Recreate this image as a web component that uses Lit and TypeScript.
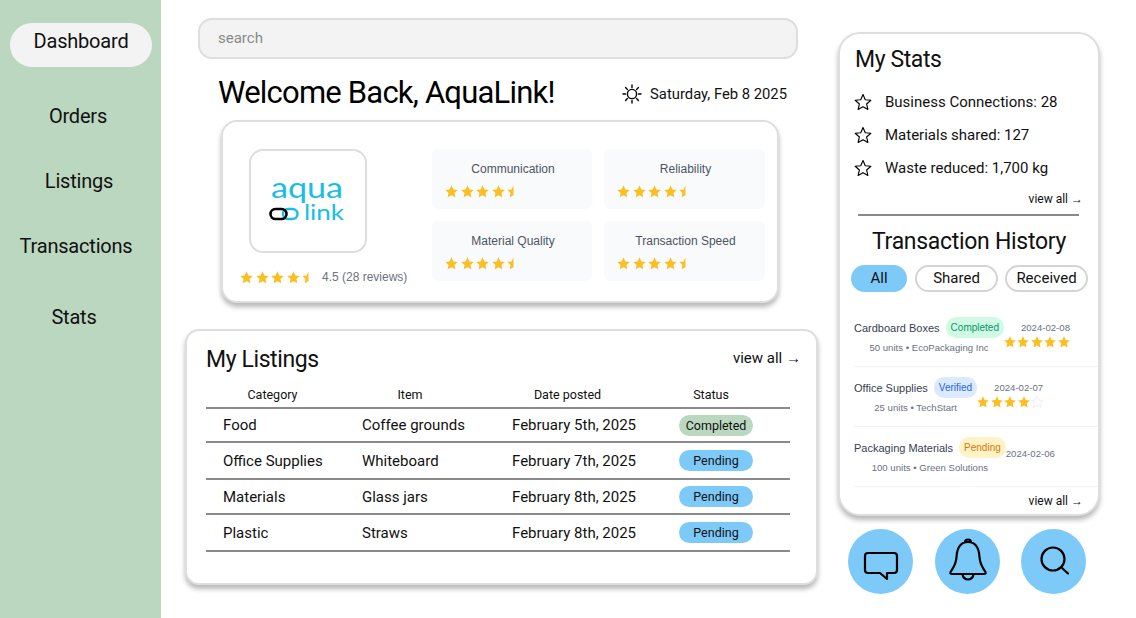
import { LitElement, html, css, svg } from 'lit'
import { customElement } from 'lit/decorators.js'

const STAR = 'M6 .3l1.750 3.750 4 .500-3 2.800.800 4.050L6 9.400l-3.550 2 .800-4.050-3-2.800 4-.500z'

// value is 0..5, a .5 gives the clipped half star of the reference
function stars(value: number) {
  return [1, 2, 3, 4, 5].map((n) => {
    const full = value >= n
    const half = !full && value > n - 1
    return html`<svg class="star" viewBox="0 0 12 12">
      ${half
        ? svg`<path d=${STAR} fill="#fbbf24" clip-path="inset(0 50% 0 0)"></path>`
        : svg`<path d=${STAR} fill=${full ? '#fbbf24' : 'none'} stroke=${full ? '#fbbf24' : '#e5e7eb'} stroke-width=${full ? 0 : 0.7}></path>`}
    </svg>`
  })
}

const ratings = ['Communication', 'Reliability', 'Material Quality', 'Transaction Speed']

const listings = [
  ['Food', 'Coffee grounds', 'February 5th, 2025', 'Completed'],
  ['Office Supplies', 'Whiteboard', 'February 7th, 2025', 'Pending'],
  ['Materials', 'Glass jars', 'February 8th, 2025', 'Pending'],
  ['Plastic', 'Straws', 'February 8th, 2025', 'Pending'],
]

const myStats = ['Business Connections: 28', 'Materials shared: 127', 'Waste reduced: 1,700 kg']

const history = [
  { name: 'Cardboard Boxes', badge: 'Completed', kind: 'done', sub: '50 units • EcoPackaging Inc', date: '2024-02-08', rate: 5 },
  { name: 'Office Supplies', badge: 'Verified', kind: 'verified', sub: '25 units • TechStart', date: '2024-02-07', rate: 4 },
  { name: 'Packaging Materials', badge: 'Pending', kind: 'pending', sub: '100 units • Green Solutions', date: '2024-02-06', rate: 0 },
]

@customElement('app-root')
export class AppRoot extends LitElement {
  static styles = css`
    :host {
      display: grid;
      grid-template-columns: 161px 677px 262px;
      width: 1136px;
      height: 618px;
      overflow: hidden;
      background: #fff;
      color: #111;
      font-family: 'Roboto', sans-serif;
    }

    .sidebar {
      background: #bbd7c0;
      padding: 23px 9px 0 10px;
      display: flex;
      flex-direction: column;
      font-size: 20px;
      letter-spacing: -0.2px;
    }
    .nav-item {
      height: 44px;
      text-align: center;
      margin-top: 21px;
      line-height: 44px;
      white-space: nowrap;
    }
    .nav-item.active {
      margin-top: 0;
      line-height: 36px;
      background: #f3f3f3;
      border-radius: 22px;
    }
    .nav-item:nth-child(2) { margin-top: 27px; padding-right: 6px; }
    .nav-item:nth-child(3) { padding-right: 4px; }
    .nav-item:nth-child(4) { padding-right: 10px; }
    .nav-item:nth-child(5) { margin-top: 27px; padding-right: 14px; }

    .main {
      padding: 18px 0 0 24px;
      display: flex;
      flex-direction: column;
    }
    .search {
      box-sizing: border-box;
      width: 600px;
      height: 41px;
      margin-left: 13px;
      padding: 0 18px 2px;
      display: flex;
      align-items: center;
      background: #f3f3f3;
      border: 2px solid #dedede;
      border-radius: 14px;
      color: #8a8a8a;
      font-size: 15px;
    }
    .welcome {
      display: flex;
      justify-content: space-between;
      align-items: center;
      width: 569px;
      height: 44px;
      margin: 11px 0 0 33px;
    }
    h1 {
      margin: 0;
      font-size: 31px;
      font-weight: 400;
      letter-spacing: -0.8px;
      color: #000;
    }
    .date {
      display: flex;
      align-items: center;
      gap: 8px;
      padding-top: 3px;
      font-size: 14.8px;
    }
    .date svg { width: 20px; height: 20px; }

    .card {
      box-sizing: border-box;
      background: #fff;
      border: 2px solid #dedede;
      box-shadow: 0 4px 5px rgba(0, 0, 0, 0.28);
    }
    .profile {
      width: 558px;
      height: 183px;
      margin: 6px 0 0 36px;
      border-radius: 16px;
      padding: 27px 11px 0 17px;
      display: flex;
    }
    .brand { width: 192px; flex: none; }
    .logo {
      box-sizing: border-box;
      width: 118px;
      height: 104px;
      margin: 0 0 0 9px;
      border: 2px solid #dedede;
      border-radius: 14px;
    }
    .logo svg { display: block; width: 100%; height: 100%; }
    .score {
      display: flex;
      align-items: center;
      gap: 7px;
      margin-top: 17px;
      font: 12px 'Liberation Sans', sans-serif;
      color: #6b7280;
    }
    .tiles {
      display: grid;
      grid-template-columns: 160px 161px;
      grid-auto-rows: 60px;
      gap: 12px;
    }
    .tile {
      box-sizing: border-box;
      background: #f9fafb;
      border-radius: 6px;
      padding: 13px 0 0 13px;
      font: 12px 'Liberation Sans', sans-serif;
      color: #4b5563;
    }
    .tile-label { text-align: center; padding-right: 11px; height: 23px; }

    .stars { display: flex; gap: 2.500px; }
    .star { width: 13px; height: 13px; display: block; flex: none; }

    .listings {
      width: 633px;
      height: 256px;
      margin-top: 26px;
      border-radius: 14px;
      padding: 0 26px 0 19px;
    }
    .listings-head {
      display: flex;
      justify-content: space-between;
      align-items: center;
      height: 55px;
      padding-top: 2px;
      box-sizing: border-box;
      margin-right: -11px;
    }
    h2 {
      margin: 0;
      font-size: 23px;
      font-weight: 400;
      letter-spacing: -0.4px;
      color: #111;
    }
    .view-all { font-size: 15px; white-space: nowrap; padding-bottom: 4px; }
    .row {
      display: grid;
      grid-template-columns: 139px 150px 167px 1fr;
      align-items: center;
      height: 35px;
      border-bottom: 2px solid #8a8a8a;
      box-sizing: border-box;
      font-size: 15px;
      padding-left: 17px;
    }
    .row:nth-of-type(even) { height: 37px; }
    .row:nth-of-type(3) { height: 34px; }
    .row.header {
      height: 23px;
      padding: 0 0 4px;
      font-size: 12.500px;
      grid-template-columns: 133px 142px 173px 114px;
      text-align: center;
    }
    .pill {
      width: 74px;
      height: 21px;
      line-height: 21px;
      border-radius: 11px;
      text-align: center;
      font-size: 12.500px;
      background: #7dc9f8;
    }
    .pill.done { background: #bbd7c0; }

    .side {
      padding-top: 32px;
      display: flex;
      flex-direction: column;
    }
    .stats {
      height: 484px;
      border-radius: 22px;
      padding: 12px 0 0 0;
      overflow: hidden;
    }
    .stats h2 { padding-left: 15px; line-height: 28px; }
    .stat {
      display: flex;
      align-items: center;
      gap: 13px;
      height: 33px;
      padding-left: 13px;
      font-size: 15px;
    }
    .stat-list { margin-top: 11px; }
    .stat svg { width: 18px; height: 18px; flex: none; margin-left: 1px; }
    .more {
      text-align: right;
      padding-right: 15px;
      margin-top: 7px;
      font-size: 12px;
      line-height: 16px;
    }
    .stats hr {
      margin: 7px 19px 0 18px;
      border: 0;
      border-top: 2px solid #8a8a8a;
    }
    .history-title {
      margin: 12px 0 0;
      text-align: center;
      font-size: 23px;
      font-weight: 400;
      letter-spacing: -0.3px;
      line-height: 28px;
    }
    .filters {
      display: flex;
      gap: 7px;
      margin: 9px 0 0 11px;
      font-size: 15px;
    }
    .filter {
      box-sizing: border-box;
      height: 27px;
      line-height: 23px;
      text-align: center;
      border: 2px solid #d4d4d4;
      border-radius: 14px;
      width: 83px;
    }
    .filter.on {
      width: 56px;
      margin-right: 1px;
      background: #7dc9f8;
      border-color: #7dc9f8;
    }
    .tx-list { margin: 15px 0 0 14px; }
    .tx {
      box-sizing: border-box;
      height: 60px;
      padding-bottom: 3px;
      border-bottom: 1px solid #f3f4f6;
      display: flex;
      align-items: center;
      font: 9.600px 'Liberation Sans', sans-serif;
      color: #6b7280;
    }
    .tx-name {
      display: flex;
      align-items: center;
      gap: 6px;
      color: #374151;
      font-size: 11px;
    }
    .badge {
      padding: 0 5px;
      height: 21px;
      line-height: 21px;
      border-radius: 10px;
      font-size: 10px;
    }
    .badge.done { background: #d1fae5; color: #059669; }
    .badge.verified { background: #dbeafe; color: #2563eb; }
    .badge.pending { background: #fef3c7; color: #d97706; }
    .tx-sub { text-align: center; margin-top: 4px; }
    .tx-side { display: flex; flex-direction: column; align-items: flex-end; }
    .tx-date { line-height: 12px; margin-bottom: 2px; }
    .tx .stars { gap: 1.500px; }
    .tx .star { width: 12px; height: 12px; }
    .foot { margin-top: 6px; }

    .actions {
      display: flex;
      gap: 21.500px;
      margin: 13px 0 0 10px;
    }
    .round {
      width: 65px;
      height: 65px;
      border-radius: 50%;
      background: #7dc9f8;
    }
    .round svg {
      display: block;
      width: 65px;
      height: 65px;
      fill: none;
      stroke: #000;
      stroke-width: 2.200;
      stroke-linejoin: round;
      stroke-linecap: round;
    }
  `

  renderSidebar() {
    const items = ['Dashboard', 'Orders', 'Listings', 'Transactions', 'Stats']
    return html`<nav class="sidebar">
      ${items.map((item, i) => html`<div class="nav-item ${i === 0 ? 'active' : ''}">${item}</div>`)}
    </nav>`
  }

  renderLogo() {
    return html`<svg viewBox="0 0 114 100">
      <text x="20" y="47" textLength="72" lengthAdjust="spacingAndGlyphs" font-family="Lato" font-size="29" fill="#19bde6">aqua</text>
      <text x="53" y="69" textLength="40" lengthAdjust="spacingAndGlyphs" font-family="Lato" font-size="21" fill="#19bde6">link</text>
      <rect x="32" y="58" width="14.500" height="10" rx="5" fill="none" stroke="#19bde6" stroke-width="2.400"></rect>
      <rect x="19.500" y="58" width="16" height="10" rx="5" fill="none" stroke="#000" stroke-width="2.600"></rect>
    </svg>`
  }

  renderProfile() {
    return html`<section class="card profile">
      <div class="brand">
        <div class="logo">${this.renderLogo()}</div>
        <div class="score"><div class="stars">${stars(4.5)}</div>4.5 (28 reviews)</div>
      </div>
      <div class="tiles">
        ${ratings.map(
          (r) => html`<div class="tile">
            <div class="tile-label">${r}</div>
            <div class="stars">${stars(4.5)}</div>
          </div>`
        )}
      </div>
    </section>`
  }

  renderListings() {
    return html`<section class="card listings">
      <div class="listings-head"><h2>My Listings</h2><span class="view-all">view all →</span></div>
      <div class="row header"><span>Category</span><span>Item</span><span>Date posted</span><span>Status</span></div>
      ${listings.map(
        (l) => html`<div class="row">
          <span>${l[0]}</span><span>${l[1]}</span><span>${l[2]}</span>
          <div class="pill ${l[3] === 'Completed' ? 'done' : ''}">${l[3]}</div>
        </div>`
      )}
    </section>`
  }

  renderStats() {
    return html`<section class="card stats">
      <h2>My Stats</h2>
      <div class="stat-list">
        ${myStats.map(
          (s) => html`<div class="stat">
            <svg viewBox="0 0 24 24" fill="none" stroke="#000" stroke-width="1.500" stroke-linejoin="round">
              <path d="M12 2l3 7 7.500 .7-5.700 4.900 1.700 7.400L12 18.200 5.500 22l1.700-7.400L1.500 9.700 9 9z"></path>
            </svg>
            ${s}
          </div>`
        )}
      </div>
      <div class="more">view all →</div>
      <hr />
      <div class="history-title">Transaction History</div>
      <div class="filters">
        <div class="filter on">All</div>
        <div class="filter">Shared</div>
        <div class="filter">Received</div>
      </div>
      <div class="tx-list">
        ${history.map(
          (t) => html`<div class="tx">
            <div>
              <div class="tx-name">${t.name}<span class="badge ${t.kind}">${t.badge}</span></div>
              <div class="tx-sub">${t.sub}</div>
            </div>
            <div class="tx-side">
              <div class="tx-date">${t.date}</div>
              ${t.rate ? html`<div class="stars">${stars(t.rate)}</div>` : ''}
            </div>
          </div>`
        )}
      </div>
      <div class="more foot">view all →</div>
    </section>`
  }

  render() {
    return html`
      ${this.renderSidebar()}
      <main class="main">
        <div class="search">search</div>
        <div class="welcome">
          <h1>Welcome Back, AquaLink!</h1>
          <div class="date">
            <svg viewBox="0 0 20 20" fill="none" stroke="#000" stroke-width="1.400" stroke-linecap="round">
              <circle cx="10" cy="10" r="4.600"></circle>
              <path d="M10 1v2.500M10 16.500V19M1 10h2.500M16.500 10H19M3.600 3.600l1.800 1.800M14.600 14.600l1.800 1.800M3.600 16.400l1.800-1.800M14.600 5.400l1.800-1.800"></path>
            </svg>
            Saturday, Feb 8 2025
          </div>
        </div>
        ${this.renderProfile()}
        ${this.renderListings()}
      </main>
      <aside class="side">
        ${this.renderStats()}
        <div class="actions">
          <div class="round">
            <svg viewBox="0 0 65 65"><path d="M20 24H46a3 3 0 0 1 3 3V41a3 3 0 0 1-3 3H39V50L32 44H20a3 3 0 0 1-3-3V27a3 3 0 0 1 3-3z"></path></svg>
          </div>
          <div class="round">
            <svg viewBox="0 0 65 65"><path d="M33 13C25 13 22 20 21.500 28 21 36 18 39 15.500 43 15 45 16 45 17 45H49C50 45 51 45 50.500 43 48 39 45 36 44.500 28 44 20 41 13 33 13ZM27.500 45a5.500 5.500 0 0 0 11 0M30 13.500a3 3 0 0 1 6 0"></path></svg>
          </div>
          <div class="round">
            <svg viewBox="0 0 65 65"><circle cx="32" cy="30" r="11.500"></circle><path d="M41 39l6 5.500"></path></svg>
          </div>
        </div>
      </aside>
    `
  }
}
